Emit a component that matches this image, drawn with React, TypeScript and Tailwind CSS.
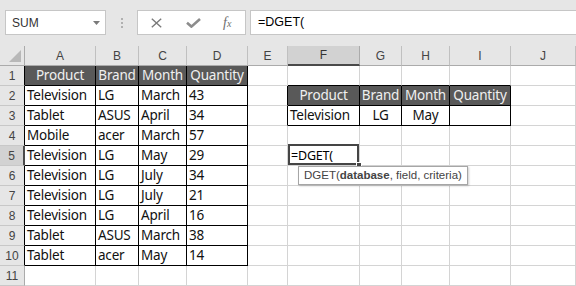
import React from "react";

const COLS = ["A", "B", "C", "D", "E", "F", "G", "H", "I", "J"];

const MAIN: string[][] = [
  ["Product", "Brand", "Month", "Quantity"],
  ["Television", "LG", "March", "43"],
  ["Tablet", "ASUS", "April", "34"],
  ["Mobile", "acer", "March", "57"],
  ["Television", "LG", "May", "29"],
  ["Television", "LG", "July", "34"],
  ["Television", "LG", "July", "21"],
  ["Television", "LG", "April", "16"],
  ["Tablet", "ASUS", "March", "38"],
  ["Tablet", "acer", "May", "14"],
];

const CRIT: string[][] = [
  ["Product", "Brand", "Month", "Quantity"],
  ["Television", "LG", "May", ""],
];

const cellFont = { fontFamily: "'Noto Sans', 'Liberation Sans', sans-serif" };
const uiFont = { fontFamily: "'Liberation Sans', Arial, sans-serif" };

function Cell({ row, col }: { row: number; col: number }) {
  let text = "";
  let kind: "grid" | "darkhead" | "data" = "grid";
  let align: "left" | "center" = "left";
  let rightBlack = false;
  let bottomBlack = false;

  if (col <= 3 && row >= 1 && row <= 10) {
    text = MAIN[row - 1][col];
    kind = row === 1 ? "darkhead" : "data";
    align = row === 1 ? "center" : "left";
    rightBlack = true;
    bottomBlack = true;
  } else if (col >= 5 && col <= 8 && (row === 2 || row === 3)) {
    text = CRIT[row - 2][col - 5];
    kind = row === 2 ? "darkhead" : "data";
    align = row === 2 || col !== 5 ? "center" : "left";
    rightBlack = true;
    bottomBlack = true;
  } else if (col >= 5 && col <= 8 && row === 1) {
    bottomBlack = true;
  } else if (col === 4 && (row === 2 || row === 3)) {
    rightBlack = true;
  }

  const isActive = row === 5 && col === 5;

  const cls = [
    "relative h-[20px] border-r border-b leading-[19px] text-[13.5px] tracking-[-0.2px] whitespace-nowrap overflow-visible",
    rightBlack ? "border-r-black" : "border-r-[#d4d4d4]",
    bottomBlack ? "border-b-black" : "border-b-[#d4d4d4]",
    kind === "darkhead" ? "bg-[#595959] text-[#f0f0f0]" : "bg-white text-[#111]",
    align === "center" ? "text-center" : "text-left pl-[2px]",
  ].join(" ");

  return (
    <div className={cls} style={cellFont}>
      {text}
      {isActive && (
        <>
          <span className="pl-[1px] text-[12.5px] text-black">=DGET(</span>
          <div className="absolute -top-[2px] left-0 right-0 bottom-0 border-2 border-[#454545] z-10 pointer-events-none" />
          <div className="absolute -right-[3px] -bottom-[3px] w-[6px] h-[6px] bg-[#454545] border border-white z-20" />
          <div
            className="absolute left-[10px] top-[20px] z-30 h-[19px] bg-white border border-[#a6a6a6] shadow-[1px_1px_2px_rgba(0,0,0,0.2)] px-[5px] leading-[17px] text-[11.5px] tracking-normal text-[#444] whitespace-nowrap"
            style={uiFont}
          >
            DGET(<span className="font-bold">database</span>, field, criteria)
          </div>
        </>
      )}
    </div>
  );
}

function RowHeader({ row }: { row: number }) {
  const selected = row === 5;
  const cls = [
    "h-[20px] border-b border-b-[#c8c8c8] flex items-center justify-center text-[12px] text-[#444]",
    selected
      ? "bg-[#d2d2d2] border-r-2 border-r-[#4a4a4a]"
      : row <= 10
      ? "bg-[#e6e6e6] border-r border-r-black"
      : "bg-[#e6e6e6] border-r border-r-[#ababab]",
  ].join(" ");
  return (
    <div className={cls} style={uiFont}>
      {row}
    </div>
  );
}

export default function App() {
  const rows = [1, 2, 3, 4, 5, 6, 7, 8, 9, 10, 11];
  return (
    <div className="w-[576px] h-[286px] overflow-hidden bg-white" style={uiFont}>
      {/* Toolbar */}
      <div className="h-[46px] bg-[#e6e6e6] flex items-start pt-[10px] pl-[5px]">
        <div className="w-[101px] h-[25px] bg-white border border-[#c6c6c6] flex items-center justify-between pl-[6px] pr-[5px]">
          <span className="text-[12px] text-[#333]">SUM</span>
          <svg width="7" height="4" viewBox="0 0 7 4">
            <polygon points="0,0 7,0 3.5,4" fill="#7a7a7a" />
          </svg>
        </div>
        <div className="w-[31px] h-[25px] flex flex-col items-center justify-center gap-[2px]">
          <div className="w-[2px] h-[2px] bg-[#b0b0b0]" />
          <div className="w-[2px] h-[2px] bg-[#b0b0b0]" />
          <div className="w-[2px] h-[2px] bg-[#b0b0b0]" />
        </div>
        <div className="w-[109px] h-[25px] bg-white border border-[#c6c6c6] flex items-center pl-[13px]">
          <svg width="11" height="10" viewBox="0 0 11 10">
            <path d="M0.8 0.8 L10.2 9.2 M10.2 0.8 L0.8 9.2" stroke="#7a7a7a" strokeWidth="1.4" fill="none" />
          </svg>
          <svg width="15" height="10" viewBox="0 0 15 10" className="ml-[24px]">
            <path d="M1 4.8 L5.4 8.6 L14 1" stroke="#8c8c8c" strokeWidth="2.6" fill="none" />
          </svg>
          <span
            className="ml-[22px] italic text-[14px] text-[#6e6e6e] leading-none"
            style={{ fontFamily: "'Liberation Serif', serif" }}
          >
            f<span className="text-[10px]">x</span>
          </span>
        </div>
        <div className="ml-[4px] flex-1 h-[25px] bg-white border border-[#c6c6c6] border-r-0 flex items-center pl-[7px] text-[12.5px] text-black">
          =DGET(
        </div>
      </div>

      {/* Grid */}
      <div className="grid grid-cols-[25px_71px_43px_48px_61px_40px_72px_42px_48px_61px_65px]">
        <div className="h-[20px] bg-[#e6e6e6] border-r border-b border-[#ababab] flex items-end justify-end pr-[3px] pb-[3px]">
          <svg width="12" height="12" viewBox="0 0 12 12">
            <polygon points="12,0 12,12 0,12" fill="#b8b8b8" />
          </svg>
        </div>
        {COLS.map((c) =>
          c === "F" ? (
            <div
              key={c}
              className="h-[20px] bg-[#d2d2d2] border-r border-r-[#ababab] border-b-2 border-b-[#4a4a4a] flex items-center justify-center text-[12px] text-[#333]"
            >
              {c}
            </div>
          ) : (
            <div
              key={c}
              className="h-[20px] bg-[#e6e6e6] border-r border-r-[#c0c0c0] border-b border-b-[#ababab] flex items-center justify-center text-[12px] text-[#444]"
            >
              {c}
            </div>
          )
        )}
        {rows.map((r) => (
          <React.Fragment key={r}>
            <RowHeader row={r} />
            {COLS.map((_, ci) => (
              <Cell key={ci} row={r} col={ci} />
            ))}
          </React.Fragment>
        ))}
      </div>
    </div>
  );
}
